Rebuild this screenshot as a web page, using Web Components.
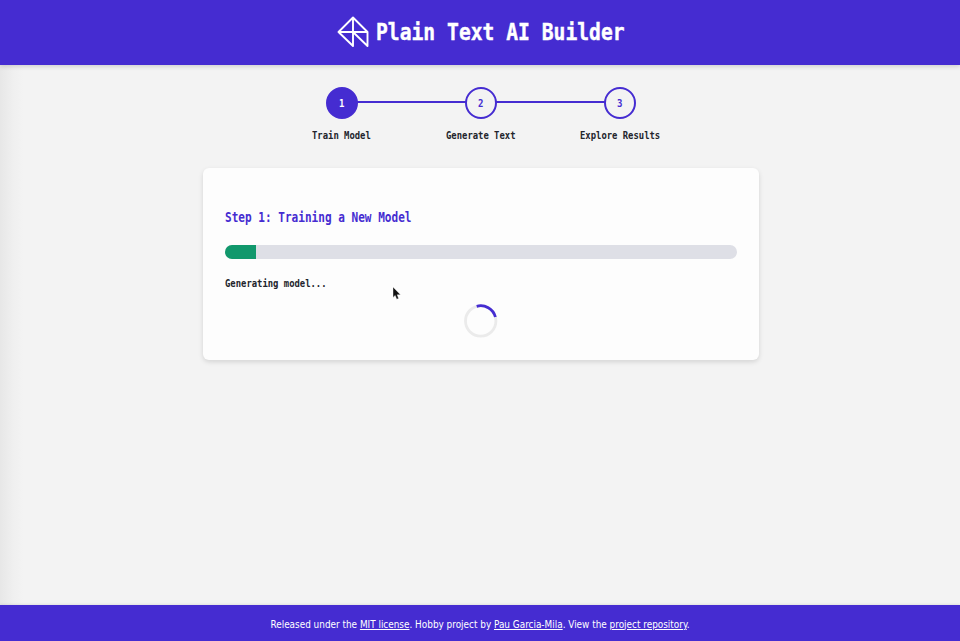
<!DOCTYPE html>
<html lang="en"><head><meta charset="utf-8"><title>Plain Text AI Builder</title>
<style>
html,body{margin:0;height:100%}
body{background:#f3f3f3;color:#22242b;font-family:"Liberation Sans",sans-serif;overflow:hidden}
</style></head><body>
<app-shell>
<app-header slot="header">Plain Text AI Builder</app-header>
<step-list></step-list>
<training-card></training-card>
<app-footer slot="footer"></app-footer>
</app-shell>
<pointer-cursor></pointer-cursor>
<script>
function define(name, html){
  const t=document.createElement('template'); t.innerHTML=html;
  customElements.define(name, class extends HTMLElement{
    constructor(){super();this.attachShadow({mode:'open'}).appendChild(t.content.cloneNode(true));}
  });
}
/* Condensed monospace text: a fixed width box with horizontally scaled glyphs. */
define('mono-text',`<style>
:host{display:block;width:var(--w);white-space:nowrap;font-family:"DejaVu Sans Mono",monospace;font-weight:700}
span{display:inline-block;transform:scaleX(var(--s));transform-origin:0 50%}
</style><span><slot></slot></span>`);
define('app-shell',`<style>
:host{display:flex;flex-direction:column;height:641px;width:960px;background:linear-gradient(90deg,#e7e7e7,#f0f0f0 14px,#f3f3f3 24px)}
main{flex:1;display:flex;flex-direction:column;align-items:center;padding-top:22px}
</style><slot name="header"></slot><main><slot></slot></main><slot name="footer"></slot>`);
define('app-header',`<style>
:host{display:flex;align-items:center;justify-content:center;gap:7px;height:64.5px;padding:0 0 0 2px;box-sizing:border-box;background:#452cd1;color:#fff;box-shadow:0 1px 5px rgba(0,0,0,.18);flex:none}
svg{display:block;width:32px;height:32px;margin-top:-1px}
mono-text{font-size:22.5px;line-height:30px;--w:248.5px;--s:.874;-webkit-text-stroke:.4px #fff}
</style><svg viewBox="0 0 32 32" fill="none" stroke="#fff" stroke-width="1.9" stroke-linejoin="round" stroke-linecap="round"><path d="M16 1.5 1.5 16 16 30V1.5L30.5 16V30L16 16M1.5 16h29"/></svg><mono-text><slot></slot></mono-text>`);
define('step-item',`<style>
:host{display:flex;flex-direction:column;align-items:center;width:139px}
.dot{width:32px;height:32px;box-sizing:border-box;border:2px solid #452cd1;border-radius:50%;background:var(--bg,#f3f3f3);color:var(--fg,#452cd1);display:flex;align-items:center;justify-content:center}
.dot mono-text{font-size:10.5px;line-height:14px;--w:5.4px;--s:.86}
.label{font-size:10.3px;line-height:14px;margin-top:9px;--s:.862}
</style><div class="dot"><mono-text><slot name="number"></slot></mono-text></div><mono-text class="label"><slot></slot></mono-text>`);
define('step-list',`<style>
:host{display:grid;grid-template-columns:repeat(3,139px);background:linear-gradient(#452cd1,#452cd1) 70px 14px/278px 2px no-repeat;padding-left:1px}
step-item:first-of-type{--bg:#452cd1;--fg:#fff}
</style><step-item style="--w:58.8px"><span slot="number">1</span>Train Model</step-item><step-item style="--w:69.5px"><span slot="number">2</span>Generate Text</step-item><step-item style="--w:80px"><span slot="number">3</span>Explore Results</step-item>`);
define('progress-bar',`<style>
:host{display:block;height:14px;border-radius:7px;background:#dedfe6;overflow:hidden}
div{height:100%;width:31px;background:#11986c}
</style><div></div>`);
define('loading-ring',`<style>:host{display:block;width:34px;height:34px}svg{display:block}</style>
<svg width="34" height="34" viewBox="0 0 34 34" fill="none" stroke-width="2.8"><circle cx="16.7" cy="17" r="15.2" stroke="#ebebeb"/><path d="M12.7 2.3A15.2 15.2 0 0 1 31.4 13" stroke="#452cd1"/></svg>`);
define('training-card',`<style>
:host{display:flex;flex-direction:column;width:556px;height:192px;box-sizing:border-box;margin:26px 0 0 1px;padding:40px 22px 0;border-radius:6px;background:#fdfdfd;box-shadow:0 2px 5px rgba(0,0,0,.13)}
.title{font-size:13.3px;line-height:20px;color:#452cd1;--w:186.5px;--s:.832}
progress-bar{margin-top:17px}
.status{font-size:10.3px;line-height:14px;margin-top:17px;--w:102px;--s:.862}
loading-ring{align-self:center;margin-top:14px}
</style><mono-text class="title">Step 1: Training a New Model</mono-text><progress-bar></progress-bar><mono-text class="status">Generating model...</mono-text><loading-ring></loading-ring>`);
define('app-footer',`<style>
:host{display:flex;justify-content:center;align-items:center;height:36.5px;flex:none;background:#452cd1;color:#fff;font:10.8px/16px "DejaVu Sans Condensed","DejaVu Sans",sans-serif;font-stretch:condensed;box-shadow:0 -1px 2px rgba(0,0,0,.08)}
p{margin:4px 0 0 1px;white-space:nowrap;transform:scaleX(.915)}a{color:inherit;text-decoration:underline}
</style><p>Released under the <a href="#">MIT license</a>. Hobby project by <a href="#">Pau Garcia-Mila</a>. View the <a href="#">project repository</a>.</p>`);
define('pointer-cursor',`<style>:host{position:absolute;left:392px;top:286px;width:9px;height:14px}svg{display:block}</style>
<svg width="9" height="14" viewBox="0 0 9 14"><path d="M1 1v10.4l2.2-2 1.5 3.8 1.9-.8L5.2 8.8h3.3Z" fill="#111" stroke="#fff" stroke-width=".4"/></svg>`);
</script></body></html>
